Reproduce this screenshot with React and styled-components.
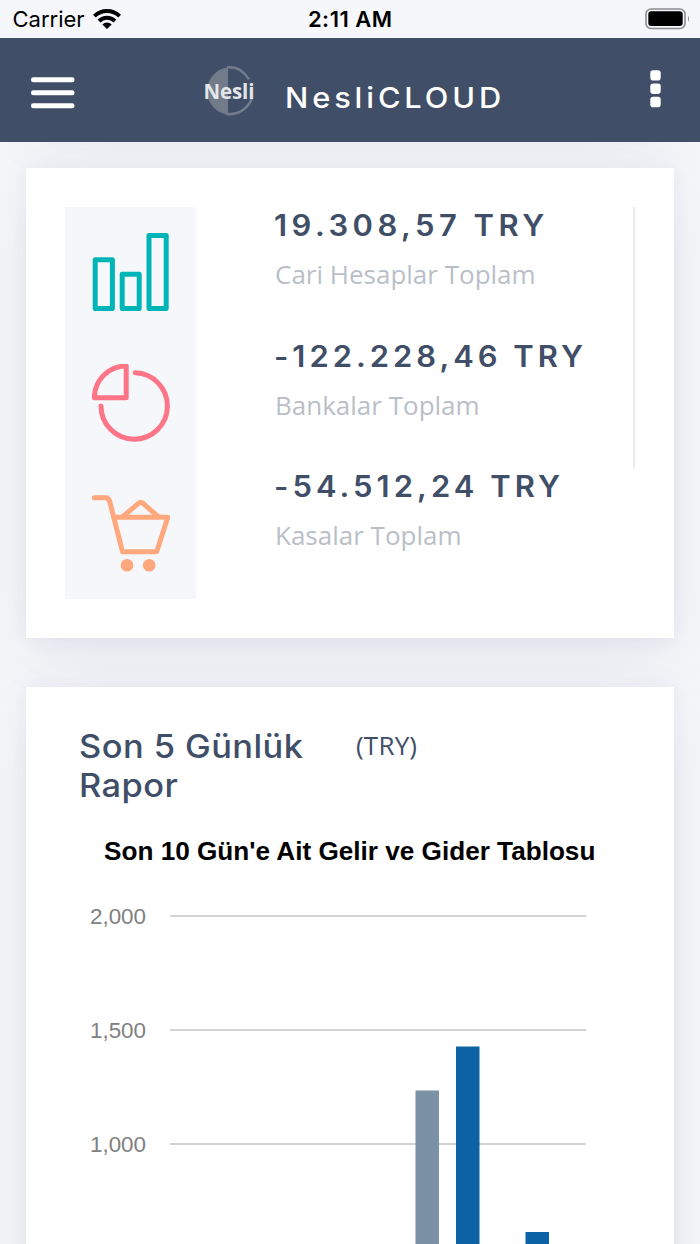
import styled, { createGlobalStyle } from "styled-components";

const GlobalStyle = createGlobalStyle`
  * {
    box-sizing: border-box;
  }
  body {
    margin: 0;
    background-color: #f5f7fa;
    font-family: "Open Sans", sans-serif;
    overflow: hidden;
  }
`;

const Page = styled.div`
  width: 700px;
  height: 1244px;
  overflow: hidden;
  display: flex;
  flex-direction: column;
  background-color: #f5f7fa;
`;

const StatusBar = styled.div`
  flex: none;
  height: 38px;
  padding: 0 10px 0 12.5px;
  display: grid;
  grid-template-columns: 1fr auto 1fr;
  align-items: center;
  z-index: 2;
  background-color: #f5f7fa;
  font-family: Inter, sans-serif;
  font-size: 22px;
  line-height: 38px;
  color: #000;
`;

const Carrier = styled.div`
  display: flex;
  align-items: center;
  gap: 8px;
`;

const Clock = styled.div`
  font-weight: 600;
  letter-spacing: 0.5px;
  margin-right: 2px;
`;

const Battery = styled.svg`
  justify-self: end;
`;

const Header = styled.header`
  flex: none;
  height: 104px;
  padding: 0 39px 0 31px;
  display: flex;
  align-items: center;
  z-index: 2;
  background-color: #404e67;
`;

const IconButton = styled.button`
  padding: 0;
  border: 0;
  background: none;
  display: flex;
  margin-bottom: ${(props) => props.$lift || 0}px;
`;

const Brand = styled.div`
  flex: 1;
  display: flex;
  align-items: center;
  gap: 28px;
  margin-left: 128px;
`;

const BrandName = styled.h2`
  margin: 16px 0 0;
  font-family: Inter, sans-serif;
  font-size: 28.5px;
  font-weight: 500;
  line-height: 36px;
  letter-spacing: 3.6px;
  white-space: nowrap;
  color: #fff;
  transform: scaleX(1.08);
  transform-origin: left;
`;

/* content is scrolled, the first card ends under the header */
const Content = styled.main`
  flex: none;
  margin-top: -124px;
  padding: 0 26px;
  display: flex;
  flex-direction: column;
  gap: 49px;
`;

const Card = styled.section`
  background-color: #fff;
  box-shadow: 0 19px 75px 0 rgba(62, 57, 107, 0.08), 0 4px 17px 0 rgba(62, 57, 107, 0.06);
`;

const PreviousCard = styled(Card)`
  height: 101px;
`;

const StatsCard = styled(Card)`
  height: 470px;
  padding: 39px;
  display: flex;
`;

const IconColumn = styled.div`
  width: 131px;
  display: flex;
  flex-direction: column;
  background-color: #f5f7fa;
`;

const IconCell = styled.div`
  flex: 1;
  display: flex;
  align-items: center;
  justify-content: center;
`;

const StatList = styled.div`
  flex: 1;
  display: flex;
  flex-direction: column;
`;

const Stat = styled.div`
  flex: 1;
  padding-left: 79px;
  border-right: 2px solid ${(props) => (props.$divider ? "#e8eaee" : "transparent")};
`;

const Amount = styled.h3`
  margin: 0 0 0 -1px;
  font-family: Inter, sans-serif;
  font-size: 29.2px;
  font-weight: 600;
  line-height: 37px;
  letter-spacing: ${(props) => props.$spacing}px;
  white-space: nowrap;
  color: #404e67;
  transform: scaleX(1.06);
  transform-origin: left;
`;

const Label = styled.span`
  display: block;
  margin-top: 11px;
  font-size: 26px;
  line-height: 39px;
  font-weight: 400;
  color: #babfc7;
`;

const ReportCard = styled(Card)`
  height: 700px;
  padding: 40px 39px;
`;

const ReportHeader = styled.div`
  padding-left: 14px;
  display: flex;
  align-items: flex-start;
`;

const ReportTitle = styled.h4`
  width: 277px;
  margin: 0;
  font-family: Inter, sans-serif;
  font-size: 32.5px;
  font-weight: 450;
  line-height: 39px;
  letter-spacing: 0.4px;
  color: #404e67;
  transform: scaleX(1.06);
  transform-origin: left;
`;

const Currency = styled.span`
  font-size: 26px;
  line-height: 36px;
  letter-spacing: 0.2px;
  color: #404e67;
`;

const ChartTitle = styled.div`
  margin-top: 30px;
  padding-left: 39px;
  font-family: "Liberation Sans", sans-serif;
  font-size: 26.15px;
  font-weight: bold;
  line-height: 32px;
  white-space: nowrap;
  color: #000;
`;

const Chart = styled.svg`
  display: block;
  margin-top: 26px;
  font-family: "Liberation Sans", sans-serif;
  font-size: 22.4px;
`;

const WifiIcon = () => (
  <svg width="28" height="20" viewBox="0 0 28 20">
    <g fill="none" stroke="#000" strokeWidth="3.9">
      <path d="M1.4 7.2A18 18 0 0 1 26.6 7.2" />
      <path d="M6 12A11.4 11.4 0 0 1 22 12" />
    </g>
    <path d="M9.3 15.4A6.7 6.7 0 0 1 18.7 15.4L14 20Z" />
  </svg>
);

const BatteryIcon = () => (
  <Battery width="45" height="22" viewBox="0 0 45 22">
    <rect x="1" y="1" width="39" height="19.5" rx="5" fill="none" stroke="#8b8c8e" strokeWidth="1.6" />
    <rect x="3.3" y="3.3" width="34.4" height="14.8" rx="3" />
    <path d="M43 7.5Q45 10.8 43 14Z" fill="#8b8c8e" />
  </Battery>
);

const MenuIcon = () => (
  <svg width="44" height="32" viewBox="0 0 44 32" fill="#fff">
    <rect width="43.5" height="5" rx="2.3" y="0.2" />
    <rect width="43.5" height="5" rx="2.3" y="13.2" />
    <rect width="43.5" height="5" rx="2.3" y="26.2" />
  </svg>
);

const DotsIcon = () => (
  <svg width="11" height="38" viewBox="0 0 11 38" fill="#fff">
    <rect x="0.3" y="0.2" width="10.4" height="10.4" rx="2.8" />
    <rect x="0.3" y="13.5" width="10.4" height="10.4" rx="2.8" />
    <rect x="0.3" y="26.8" width="10.4" height="10.4" rx="2.8" />
  </svg>
);

const Logo = () => (
  <svg width="54" height="54" viewBox="0 -2 54 54">
    <path d="M25 2.2A24 24 0 0 0 25 49.8Z" fill="#717b8a" />
    <path d="M24 2.4Q38 0.8 46 14.5M49 33A24 24 0 0 1 23 49" fill="none" stroke="#727c8c" strokeWidth="2.4" />
    <text x="0.5" y="33.5" textLength="51" fill="#e4e6e9" fontFamily="Open Sans, sans-serif" fontSize="20.5" fontWeight="700">
      Nesli
    </text>
  </svg>
);

const BarsIcon = () => (
  <svg width="78" height="78" viewBox="0 0 78 78" fill="none" stroke="#00b5b8" strokeWidth="5" strokeLinejoin="round">
    <rect x="3.2" y="26.8" width="17.2" height="48.8" />
    <rect x="30.2" y="41.3" width="17" height="34.3" />
    <rect x="57" y="2.5" width="17.2" height="73.1" />
  </svg>
);

const PieIcon = () => (
  <svg
    width="78"
    height="78"
    viewBox="0 0 78 78"
    fill="none"
    stroke="#ff7588"
    strokeWidth="5"
    strokeLinejoin="round"
    strokeLinecap="round"
  >
    <path d="M34.2 2V33.8H2.4A31.8 31.8 0 0 1 34.2 2Z" />
    <path d="M43.2 8.8A33.2 33.2 0 1 1 9 41.9" />
  </svg>
);

const CartIcon = () => (
  <svg
    width="78"
    height="78"
    viewBox="0 0 78 78"
    fill="none"
    stroke="#ffa87d"
    strokeWidth="5"
    strokeLinejoin="round"
    strokeLinecap="round"
  >
    <path d="M2.3 2.8H13.5Q16.7 2.8 17.7 6.5L30.5 56.7H64.7L75.8 22.3H22.5" />
    <path d="M31 21.5L46.5 8.3Q48.7 6.5 51 8.3L66 21.5" />
    <circle cx="35" cy="70.3" r="6.3" fill="#ffa87d" stroke="none" />
    <circle cx="57.2" cy="70.3" r="6.3" fill="#ffa87d" stroke="none" />
  </svg>
);

const stats = [
  { amount: "19.308,57 TRY", label: "Cari Hesaplar Toplam", spacing: 4.2, divider: true },
  { amount: "-122.228,46 TRY", label: "Bankalar Toplam", spacing: 3.75, divider: true },
  { amount: "-54.512,24 TRY", label: "Kasalar Toplam", spacing: 3.8 },
];

const ticks = [
  { label: "2,000", y: 23 },
  { label: "1,500", y: 137 },
  { label: "1,000", y: 251 },
];

const bars = [
  { x: 350.5, y: 197.5, color: "#7a92a3" },
  { x: 391, y: 153.5, color: "#0b62a4" },
  { x: 460.5, y: 339, color: "#0b62a4" },
];

const IncomeChart = () => (
  <Chart width="570" height="479" viewBox="0 0 570 479">
    {ticks.map(({ label, y }) => (
      <g key={label}>
        <text x="81" y={y + 7.5} textAnchor="end" fill="#808080">
          {label}
        </text>
        <rect x="105" y={y - 1} width="416" height="2" fill="#d2d3d3" />
      </g>
    ))}
    {bars.map(({ x, y, color }) => (
      <rect key={x} x={x} y={y} width="23.5" height={479 - y} fill={color} />
    ))}
  </Chart>
);

const App = () => {
  return (
    <Page>
      <GlobalStyle />
      <StatusBar>
        <Carrier>
          Carrier
          <WifiIcon />
        </Carrier>
        <Clock>2:11 AM</Clock>
        <BatteryIcon />
      </StatusBar>
      <Header>
        <IconButton $lift={-5}>
          <MenuIcon />
        </IconButton>
        <Brand>
          <Logo />
          <BrandName>NesliCLOUD</BrandName>
        </Brand>
        <IconButton $lift={3}>
          <DotsIcon />
        </IconButton>
      </Header>
      <Content>
        <PreviousCard />
        <StatsCard>
          <IconColumn>
            <IconCell><BarsIcon /></IconCell>
            <IconCell><PieIcon /></IconCell>
            <IconCell><CartIcon /></IconCell>
          </IconColumn>
          <StatList>
            {stats.map(({ amount, label, spacing, divider }) => (
              <Stat key={label} $divider={divider}>
                <Amount $spacing={spacing}>{amount}</Amount>
                <Label>{label}</Label>
              </Stat>
            ))}
          </StatList>
        </StatsCard>
        <ReportCard>
          <ReportHeader>
            <ReportTitle>Son 5 Günlük Rapor</ReportTitle>
            <Currency>(TRY)</Currency>
          </ReportHeader>
          <ChartTitle>Son 10 Gün'e Ait Gelir ve Gider Tablosu</ChartTitle>
          <IncomeChart />
        </ReportCard>
      </Content>
    </Page>
  );
};

export default App;
